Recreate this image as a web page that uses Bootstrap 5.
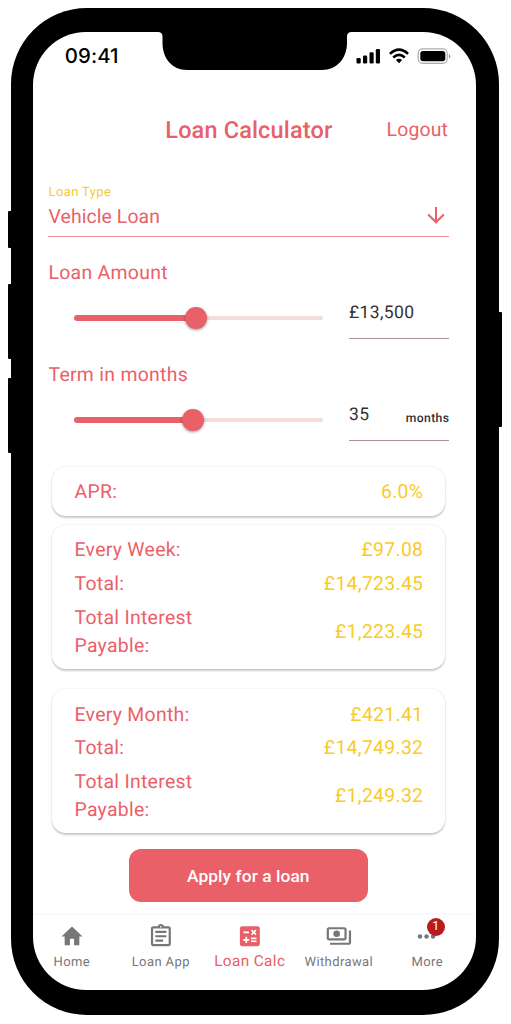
<!DOCTYPE html>
<html lang="en">
<head>
<meta charset="utf-8">
<meta name="viewport" content="width=device-width, initial-scale=1">
<title>Loan Calculator</title>
<link href="https://cdn.jsdelivr.net/npm/bootstrap@5.3.0/dist/css/bootstrap.min.css" rel="stylesheet">
<style>
:root{--coral:#ea6069;--gold:#f9cb28;--ink:#352f30}
body{font-family:Roboto,"Liberation Sans",sans-serif;background:#fff;font-size:19.4px;line-height:28px;letter-spacing:.3px;color:var(--coral);overflow:hidden;text-rendering:geometricPrecision}
.phone{width:488px;height:1006.5px;margin:8px 0 0 10.5px;padding:24px 22.5px 24.5px 22.8px;background:#000;border-radius:76px}
.screen{height:958px;background:#fff;border-radius:53px;overflow:hidden}
.side-key{position:absolute;background:#000;width:6px;border-radius:1px}
.notch{position:absolute;left:118.5px;top:-4px;width:205px;height:42px}
.status{height:48px;padding:0 25px 0 31.500px;color:#000}
.clock{font:500 20.4px/48px Inter,sans-serif;letter-spacing:.05px}
.appbar{height:50px;margin-top:25px;padding:0 28px 0 132px}
.screen-title{font-size:23.5px;font-weight:500;letter-spacing:.15px}
.logout{font-size:19.4px;letter-spacing:.15px}
.form-area{padding:0 26.7px 0 15.2px}
.type-field{margin-top:28px;height:54px;padding-top:1px;border-bottom:1.4px solid #f18e94}
.type-label{font-size:13px;line-height:17px;letter-spacing:.4px;color:var(--gold)}
.type-value{line-height:32px;letter-spacing:.1px}
.amount-row{height:59px}
.track{width:249px;height:4px;margin:29px 26px 0 25.7px;border-radius:2px;background:#f4dcdd}
.track-fill{height:6px;margin-top:-1px;border-radius:3px;background:var(--coral)}
.knob{position:absolute;right:-11px;top:-8px;width:22px;height:22px;border-radius:50%;background:var(--coral);box-shadow:0 1px 3px rgba(0,0,0,.4)}
.entry{width:100.5px;height:43px;margin-top:9px;border-bottom:1.4px solid #a89596;color:var(--ink);font-size:17.5px;line-height:34px;letter-spacing:.4px}
.unit{font-size:12.2px;font-weight:500;letter-spacing:.35px;padding-top:3px}
.result{margin:0 4px;padding:0 22px;border-radius:14px;background:#fff;box-shadow:0 1.5px 2px rgba(0,0,0,.2),0 0 2px rgba(0,0,0,.09)}
.value{color:var(--gold)}
.line-row{height:33.5px}
.apply{width:239px;height:53px;margin:16px 0 0 95.5px;--bs-btn-bg:var(--coral);--bs-btn-color:#fff;--bs-btn-border-color:var(--coral);border:0;border-radius:12px;font-size:17.4px;font-weight:500;letter-spacing:.05px}
.tabs{height:76px;margin-top:11px;border-top:2px solid #fafafa;font-size:13px;line-height:18px;letter-spacing:.4px;color:#777}
.tab{padding-top:7px}
.tab svg{display:block;margin:0 auto 4px;width:28px;height:28px;fill:currentColor}
.tab.current{color:var(--coral);font-size:15.3px;line-height:15px}
.count{position:absolute;left:37.5px;top:3px;width:18px;height:18px;border-radius:50%;background:#b71c1c;color:#fff;font-size:12.5px;line-height:18px;letter-spacing:0}
</style>
</head>
<body>
<div class="side-key" style="left:8px;top:211px;height:37px"></div>
<div class="side-key" style="left:8px;top:284px;height:75px"></div>
<div class="side-key" style="left:8px;top:378px;height:75px"></div>
<div class="side-key" style="left:496px;top:311.5px;height:115.5px"></div>
<div class="phone">
<main class="screen position-relative">
  <svg class="notch" viewBox="0 0 205 42"><path d="M0 0H205V4H199.500Q195 4 195 8.500V15C195 30 185 42 170 42H35C20 42 10.500 30 10.500 15V8.500Q10.500 4 6 4H0Z"/></svg>
  <header class="status d-flex justify-content-between align-items-center">
    <span class="clock">09:41</span>
    <svg width="95" height="18" viewBox="0 0 95 18">
      <rect x="0.500" y="11" width="4.200" height="5.500" rx="1.300"/><rect x="7" y="8.500" width="4.200" height="8" rx="1.300"/><rect x="13.500" y="5.300" width="4.200" height="11.200" rx="1.300"/><rect x="19.800" y="2" width="4.200" height="14.500" rx="1.300"/>
      <g fill="none" stroke="#000" stroke-width="2.600"><path d="M33.900 6.900Q43-1.500 52.100 6.900M37.200 10.500Q43 5.400 48.800 10.500"/></g><path d="M39.900 13.100Q43 10.600 46.100 13.100L43 16.300Z"/>
      <rect x="62.200" y="1.900" width="29" height="14.400" rx="4.500" fill="none" stroke="#aaa" stroke-width="1.200"/><rect x="64.300" y="3.900" width="25" height="10.400" rx="2.700"/><path d="M92.800 7V11.500Q94.300 11 94.300 9.200T92.800 7" fill="#999"/>
    </svg>
  </header>
  <div class="appbar d-flex justify-content-between align-items-center text-nowrap"><span class="screen-title">Loan Calculator</span><span class="logout">Logout</span></div>
  <div class="form-area">
    <section class="type-field">
      <div class="type-label">Loan Type</div>
      <div class="d-flex justify-content-between"><span class="type-value">Vehicle Loan</span>
      <svg class="me-1" style="margin-top:3px" width="18" height="22" viewBox="0 0 18 22" fill="none" stroke="#ea6069" stroke-width="2"><path d="M9 3V18M1.200 10.500L9 18.300L16.800 10.500"/></svg></div>
    </section>
    <div style="margin-top:22px">Loan Amount</div>
    <div class="amount-row d-flex"><div class="track"><div class="track-fill position-relative" style="width:121.5px"><span class="knob"></span></div></div><div class="entry">£13,500</div></div>
    <div style="margin-top:14.7px">Term in months</div>
    <div class="amount-row d-flex"><div class="track"><div class="track-fill position-relative" style="width:119px"><span class="knob"></span></div></div><div class="entry d-flex justify-content-between"><span>35</span><span class="unit">months</span></div></div>
    <section class="result d-flex justify-content-between align-items-center" style="height:49px;margin-top:19px;padding-top:1px"><span>APR:</span><span class="value">6.0%</span></section>
    <section class="result" style="height:144px;margin-top:9.3px;padding-top:8.3px">
      <div class="line-row d-flex justify-content-between align-items-center"><span>Every Week:</span><span class="value">£97.08</span></div>
      <div class="line-row d-flex justify-content-between align-items-center"><span>Total:</span><span class="value">£14,723.45</span></div>
      <div class="d-flex justify-content-between align-items-center" style="height:62.5px"><span>Total Interest<br>Payable:</span><span class="value">£1,223.45</span></div>
    </section>
    <section class="result" style="height:144px;margin-top:20.2px;padding-top:8.6px">
      <div class="line-row d-flex justify-content-between align-items-center"><span>Every Month:</span><span class="value">£421.41</span></div>
      <div class="line-row d-flex justify-content-between align-items-center"><span>Total:</span><span class="value">£14,749.32</span></div>
      <div class="d-flex justify-content-between align-items-center" style="height:62.5px"><span>Total Interest<br>Payable:</span><span class="value">£1,249.32</span></div>
    </section>
  </div>
  <button class="apply btn d-block p-0">Apply for a loan</button>
  <nav class="tabs d-flex text-center text-nowrap">
    <div class="tab" style="width:77px"><svg viewBox="0 0 24 24"><path d="M10 20v-6h4v6h5v-8h3L12 3 2 12h3v8z" transform="translate(1.200 1) scale(.9 .95)"/></svg>Home</div>
    <div class="tab" style="width:101px"><svg viewBox="0 0 24 24"><path d="M7 15h7v2H7zm0-4h10v2H7zm0-4h10v2H7zM19 3h-4.200C14.400 1.800 13.300 1 12 1s-2.400.8-2.800 2H5c-1.100 0-2 .9-2 2v14c0 1.100.9 2 2 2h14c1.100 0 2-.9 2-2V5c0-1.100-.9-2-2-2zm-7-.2c.4 0 .8.300.8.7s-.4.800-.8.800-.8-.4-.8-.8.4-.7.8-.7zM19 19H5V5h14z" transform="translate(.500 .800) scale(.95)"/></svg>Loan App</div>
    <div class="tab current" style="width:77px"><svg viewBox="0 0 24 24"><path transform="translate(.500 .800) scale(.95)" fill-rule="evenodd" d="M19 3H5c-1.100 0-2 .9-2 2v14c0 1.100.9 2 2 2h14c1.100 0 2-.9 2-2V5c0-1.100-.9-2-2-2zM13 7.100L14.100 6l1.400 1.400L16.900 6 18 7.100l-1.400 1.400L18 9.900 16.900 11l-1.400-1.400-1.400 1.400L13 9.900l1.400-1.400zM6.200 7.700h5v1.500h-5zM11.500 16h-2v2H8v-2H6v-1.500h2v-2h1.500v2h2zm6.500 1.300h-5v-1.500h5zm0-2.600h-5v-1.500h5z"/></svg>Loan Calc</div>
    <div class="tab" style="width:101px"><svg viewBox="0 0 24 24"><path transform="translate(.500 .600) scale(.95)" fill-rule="evenodd" d="M19 14V6c0-1.100-.9-2-2-2H3c-1.100 0-2 .9-2 2v8c0 1.100.9 2 2 2h14c1.100 0 2-.9 2-2zm-2 0H3V6h14zM10 7a3 3 0 1 0 0 6 3 3 0 0 0 0-6zm13 0v11c0 1.100-.9 2-2 2H4v-2h17V7z"/></svg>Withdrawal</div>
    <div class="tab position-relative" style="width:76px"><svg viewBox="0 0 24 24"><circle cx="6" cy="12.500" r="1.900"/><circle cx="11.600" cy="12.500" r="1.900"/><circle cx="17.200" cy="12.500" r="1.900"/></svg>More<span class="count">1</span></div>
  </nav>
</main>
</div>
<script src="https://cdn.jsdelivr.net/npm/bootstrap@5.3.0/dist/js/bootstrap.bundle.min.js"></script>
</body>
</html>
